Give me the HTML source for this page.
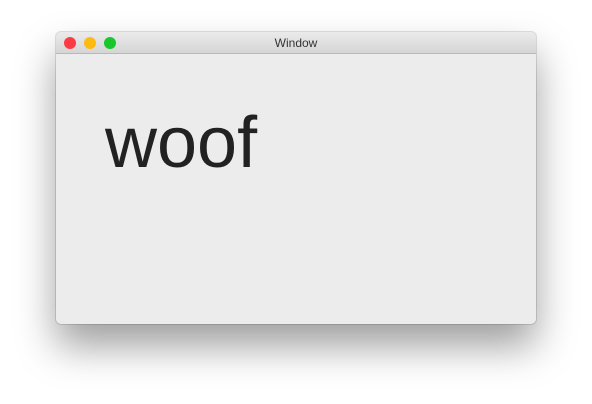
<!DOCTYPE html>
<html><head><style>
html,body{margin:0;padding:0;width:592px;height:404px;background:#fff;overflow:hidden;font-family:"Liberation Sans",sans-serif}
.win{position:absolute;left:56px;top:32px;width:480px;height:292px;border-radius:5px;background:#ececec;
box-shadow:0 22px 40px rgba(0,0,0,.38),0 0 0 1px rgba(0,0,0,.12);overflow:hidden}
.tb{height:21px;background:linear-gradient(#ebebeb,#d5d5d5);border-bottom:1px solid #b8b8b8;position:relative}
.tb .t{position:absolute;left:0;right:0;top:4px;text-align:center;font-size:12px;color:#333;line-height:14px}
.d{position:absolute;top:5px;width:12px;height:12px;border-radius:50%}
.txt{position:absolute;left:49px;top:71px;font-size:72px;color:#222;line-height:80px}
</style></head><body>
<div class="win">
<div class="tb">
<div class="d" style="left:8px;background:#fc3c44"></div>
<div class="d" style="left:28px;background:#fdbb11"></div>
<div class="d" style="left:48px;background:#17c72c"></div>
<div class="t">Window</div>
</div>
<div class="txt">woof</div>
</div>
</body></html>
